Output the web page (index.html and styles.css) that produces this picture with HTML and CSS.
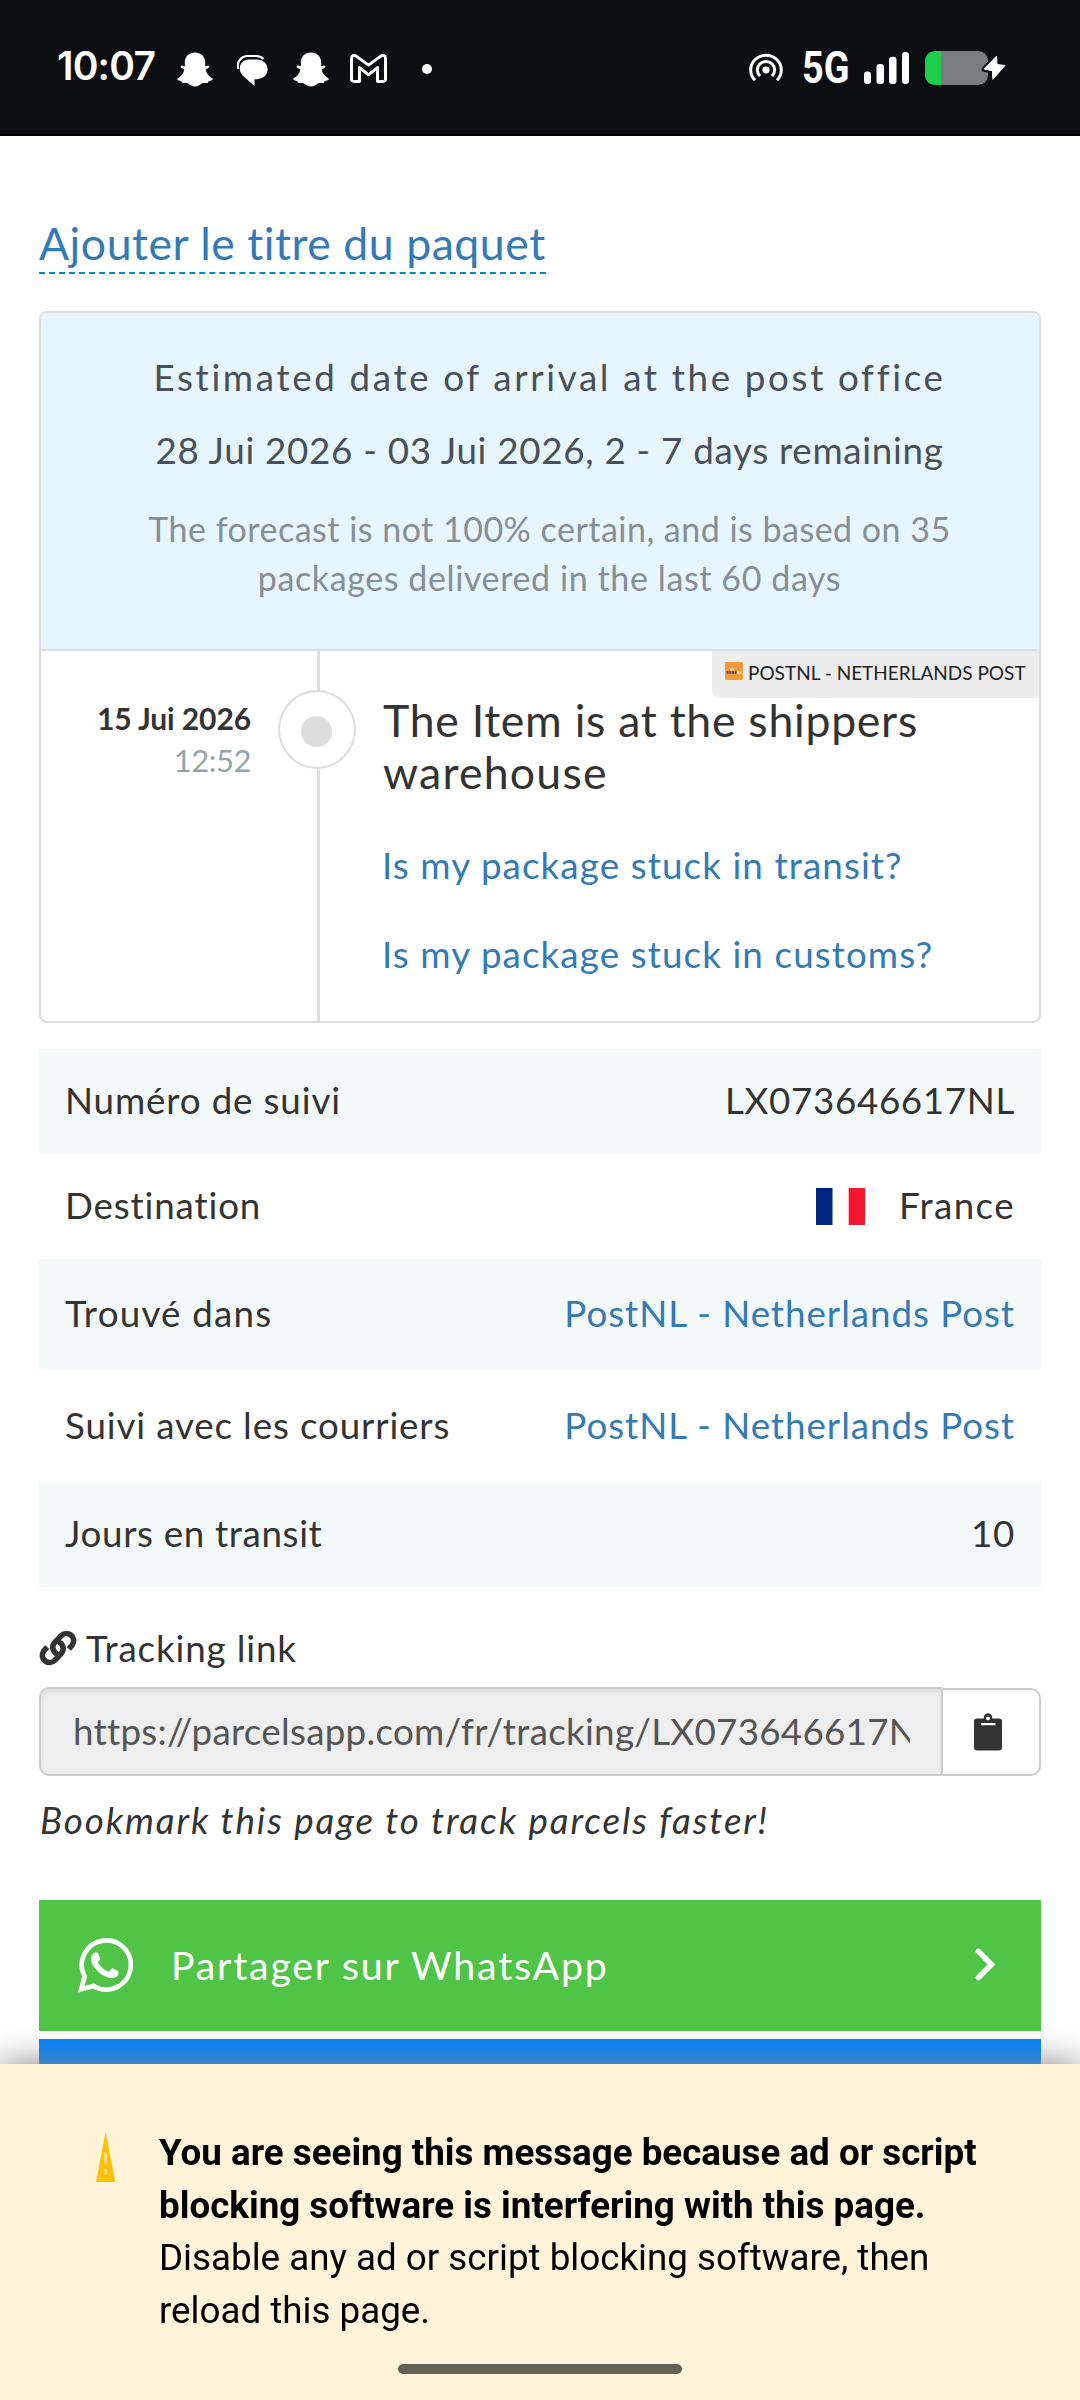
FILE: index.html
```
<!DOCTYPE html>
<html lang="fr">
<head>
<meta charset="utf-8">
<title>Suivi de colis</title>
<link rel="stylesheet" href="styles.css">
</head>
<body>
<svg class="defs" aria-hidden="true">
  <symbol id="ghost" viewBox="0 0 36 36" preserveAspectRatio="none">
    <path d="M18 .4c6 0 10.200 4.300 10.200 10.200l-.1 4 3.100-.8c1.300.2 1.700 1.400.7 2.200l-3.300 2.200c1 4 3.600 7.200 6.700 8.800.8.6.6 1.500-.6 2-1.300.5-3 .8-3.400 1.300-.3.600-.2 1.300-.9 1.600-1.600.3-3.600-.3-5.500.4-2.300 1-3.600 3.300-6.900 3.300s-4.600-2.300-6.900-3.300c-1.900-.7-3.900-.1-5.500-.4-.7-.3-.6-1-.9-1.600-.4-.5-2.100-.8-3.400-1.300-1.200-.5-1.400-1.400-.6-2 3.100-1.600 5.700-4.800 6.700-8.800L4.100 16c-1-.8-.6-2 .7-2.200l3.100.8-.1-4C7.800 4.700 12 .4 18 .4z" fill="#fff"/>
  </symbol>
</svg>

<header class="status">
  <span class="clock">10:07</span>
  <svg class="s-ghost" width="36" height="35"><use href="#ghost"/></svg>
  <svg class="s-chat" width="32" height="31" viewBox="0 0 32 32" preserveAspectRatio="none">
    <path d="M1.300 14.500C-.8 7 4 1 11.500 1H19c3 0 5.700 1.200 7.500 3" fill="none" stroke="#fff" stroke-width="2.200"/>
    <path d="M12 4.600h8.500A10.200 10.200 0 0 1 20.500 25h-3v7L5.600 21.200C-.2 14.500 3.500 4.600 12 4.600z" fill="#fff"/>
  </svg>
  <svg class="s-ghost" width="36" height="35"><use href="#ghost"/></svg>
  <svg class="s-mail" width="37" height="29" viewBox="0 0 37 30" preserveAspectRatio="none">
    <path d="M1.500 26V4.500C1.500 1.500 4 .5 6.200 2.200L18.500 11.500 30.800 2.200C33 .5 35.500 1.500 35.500 4.500V26a2.500 2.500 0 0 1-2.500 2.500H27.500V14L18.500 21.500 9.500 14V28.500H4A2.500 2.500 0 0 1 1.500 26z" fill="none" stroke="#fff" stroke-width="3" stroke-linejoin="round"/>
  </svg>
  <span class="s-dot"></span>
  <svg class="s-cast" width="34" height="29" viewBox="0 0 34 30" preserveAspectRatio="none">
    <circle cx="17" cy="17.500" r="3.600" fill="#fff"/>
    <g fill="none" stroke="#fff" stroke-width="3">
      <path d="M11 23.800a8.700 8.700 0 1 1 12 0"/>
      <path d="M6 28.300a15.300 15.300 0 1 1 22 0"/>
    </g>
  </svg>
  <span class="net"><span class="net-text">5G</span></span>
  <svg class="s-bars" width="45" height="32" viewBox="0 0 45 33" preserveAspectRatio="none" fill="#fff">
    <rect x="0" y="20" width="7" height="13" rx="3"/><rect x="12.500" y="12.500" width="7.500" height="20.500" rx="3"/><rect x="25" y="5" width="7.500" height="28" rx="3"/><rect x="38" y="0" width="7" height="33" rx="3"/>
  </svg>
  <svg class="s-batt" width="81" height="34" viewBox="0 0 81 36" preserveAspectRatio="none">
    <path d="M10 0H16V36H10A10 10 0 0 1 0 26V10A10 10 0 0 1 10 0z" fill="#1bcd48"/>
    <path d="M16 0H53A10 10 0 0 1 63 10V26A10 10 0 0 1 53 36H16z" fill="#7b7c7e"/>
    <path d="M71.500 5.500L59 19.500l8.500 2L67.500 30 79.500 15.500 71 14z" fill="#fff" stroke="#0d0e12" stroke-width="5" stroke-linejoin="round"/>
    <path d="M71.500 5.500L59 19l8.500 2L67.800 30 80 15.300 72 14.300z" fill="#fff" stroke="#fff" stroke-width="1" stroke-linejoin="round"/>
  </svg>
</header>

<main class="page">
  <a class="title">Ajouter le titre du paquet</a>

  <section class="card">
    <div class="forecast">
      <div class="f-head">Estimated date of arrival at the post office</div>
      <div class="f-date">28 Jui 2026 - 03 Jui 2026, 2 - 7 days remaining</div>
      <div class="f-note">The forecast is not 100% certain, and is based on 35<br><span class="f-note2">packages delivered in the last 60 days</span></div>
    </div>
    <div class="event">
      <div class="when"><strong class="day">15 Jui 2026</strong><span class="hour">12:52</span></div>
      <div class="rail"><div class="ring"><div class="bullet"></div></div></div>
      <div class="what">
        <div class="state">The Item is at the shippers<br><span class="state2">warehouse</span></div>
        <a class="help">Is my package stuck in transit?</a>
        <a class="help">Is my package stuck in customs?</a>
      </div>
      <div class="carrier">
        <svg width="18" height="18" viewBox="0 0 18 18">
          <rect width="18" height="18" rx="1.500" fill="#f39a3c"/>
          <path d="M4.500 5.500l1.500 1.500 1-1.800 1 1.800 1.500-1.500-.5 3H5z" fill="#fbd9ae"/>
          <path d="M1.500 10.500H11.500" stroke="#5a4a68" stroke-width="2.600" stroke-dasharray="2.200 .5"/>
          <path d="M12 10.500h4.500" stroke="#fde8cf" stroke-width="2.400" stroke-dasharray="2 .6"/>
        </svg>
        <span>POSTNL - NETHERLANDS POST</span>
      </div>
    </div>
  </section>

  <section class="facts">
    <div class="row shade"><span>Numéro de suivi</span><span class="t-num">LX073646617NL</span></div>
    <div class="row"><span>Destination</span><span class="dest"><svg width="49" height="37"><rect width="49" height="37" fill="#fff"/><rect width="16.500" height="37" fill="#00267f"/><rect x="32.700" width="16.300" height="37" fill="#f31830"/></svg><span class="t-wide">France</span></span></div>
    <div class="row tall shade"><span class="t-tr">Trouvé dans</span><a class="link">PostNL - Netherlands Post</a></div>
    <div class="row taller"><span>Suivi avec les courriers</span><a class="link">PostNL - Netherlands Post</a></div>
    <div class="row shade"><span class="t-num">Jours en transit</span><span class="t-num">10</span></div>
  </section>

  <div class="share-label">
    <svg width="38" height="38" viewBox="0 0 38 38" fill="none" stroke="#333" stroke-width="5.600" stroke-linecap="butt">
      <path d="M18.500 25.500C13 22 12.500 17 16 13.200L22 6.800C28 .5 38.500 8 33.200 16L29.800 20"/>
      <path d="M19.500 12.500C25 16 25.500 21 22 24.800L16 31.200C10 37.500 -.5 30 4.800 22L8.200 18"/>
    </svg>
    <span>Tracking link</span>
  </div>
  <div class="copy">
    <div class="field"><div class="url">https://parcelsapp.com/fr/tracking/LX073646617NL</div></div>
    <div class="copy-btn">
      <svg width="28" height="38" viewBox="0 0 28 38">
        <path d="M3 5.500H9.800A4.300 4.300 0 1 1 18.200 5.500H25A3 3 0 0 1 28 8.500V34.500A3 3 0 0 1 25 37.500H3A3 3 0 0 1 0 34.500V8.500A3 3 0 0 1 3 5.500z" fill="#333"/>
        <circle cx="14" cy="5.400" r="1.900" fill="#fff"/><rect x="7" y="10" width="14.500" height="2.200" fill="#fff"/>
      </svg>
    </div>
  </div>
  <p class="tip">Bookmark this page to track parcels faster!</p>

  <a class="share wa">
    <svg width="55" height="55" viewBox="0 0 56 56">
      <path d="M3.300 52.200L6.800 39.300A25 25 0 1 1 15.800 48.800z" fill="none" stroke="#fff" stroke-width="4.800" stroke-linejoin="miter"/>
      <path d="M15.500 15.800c1.200-1.200 4.300-1.300 5 0l2 4.900c.4 1.100-1.500 3.200-2.300 4 2.800 5 6.300 7.700 11 9.700 1-.8 3-4 4.200-3.500l5.300 2.600c1.300 1 .3 4.600-1.300 5.800-3.500 2.500-7 1.800-11 .2C21.500 36.500 17 31.500 14 25.500c-1.500-3.600-1-7.200 1.500-9.700z" fill="#fff"/>
    </svg>
    <span class="wa-text">Partager sur WhatsApp</span>
    <svg class="chev" width="21" height="33" viewBox="0 0 21 33"><path d="M3.400 3.400L16.500 16.500 3.400 29.600" fill="none" stroke="#fff" stroke-width="5.500" stroke-linecap="round" stroke-linejoin="miter"/></svg>
  </a>
  <div class="share fb"></div>
</main>

<aside class="notice">
  <svg width="20" height="50" viewBox="0 0 20 50">
    <path d="M9.700 0L19.300 50H0z" fill="#ffc107"/>
    <rect x="8.400" y="20.500" width="2.500" height="11" rx="1.200" fill="#ffe69a"/><rect x="8.400" y="36.500" width="2.500" height="6" rx="1.200" fill="#ffe69a"/>
  </svg>
  <p class="notice-text"><strong>You are seeing this message because ad or script<br>blocking software is interfering with this page.</strong><br>Disable any ad or script blocking software, then<br>reload this page.</p>
  <div class="pill"></div>
</aside>
</body>
</html>
```
FILE: styles.css
```
* { box-sizing: border-box; }
html, body { margin: 0; height: 2400px; overflow: hidden; }
body { background: #fff; color: #333; font: 36.75px/52px Lato, "Open Sans", sans-serif; letter-spacing: .85px; white-space: nowrap; font-variant-ligatures: none; }
svg { display: block; flex: none; }
.defs { position: absolute; width: 0; height: 0; }

.status { height: 136px; background: #0d0e12; border-bottom: 2px solid #000; display: flex; align-items: flex-start; color: #fff; padding-left: 57px; letter-spacing: 0; }
.clock { width: 120px; margin-top: 42px; font: 600 39px/48px Inter, sans-serif; letter-spacing: -.8px; }
.s-ghost { margin-top: 52px; }
.s-chat { margin: 55px 24px 0; }
.s-mail { margin: 54px 0 0 21px; }
.s-dot { width: 10px; height: 10px; border-radius: 50%; background: #fff; margin: 64px 0 0 35px; }
.s-cast { margin: 53px 0 0 317px; }
.net { width: 47px; margin: 43px 0 0 19px; }
.net-text { display: block; width: 60px; font: 700 44.5px/50px Roboto, sans-serif; transform: scaleX(.85); transform-origin: 0 0; }
.s-bars { margin: 52px 0 0 15px; }
.s-batt { margin: 51px 0 0 16px; }

.page { padding: 76px 39px 0; display: flex; flex-direction: column; }
.title { align-self: flex-start; height: 62px; font-size: 44.6px; line-height: 62px; letter-spacing: .52px; color: #337ab7; border-bottom: 2px dashed #08c; }

.card { margin-top: 37px; height: 712px; border: 2px solid #ddd; border-radius: 8px; overflow: hidden; }
.forecast { height: 338px; padding: 38px 0 0 19px; background: #e7f5ff; border-bottom: 2px solid #ddd; text-align: center; color: #495057; }
.f-head { letter-spacing: 2.65px; }
.f-date { margin-top: 21px; letter-spacing: .7px; }
.f-note { margin-top: 28px; font-size: 34px; line-height: 49px; letter-spacing: .49px; color: #868e96; }
.f-note2 { letter-spacing: .6px; }

.event { position: relative; height: 370px; display: flex; }
.when { width: 237px; padding: 46px 27px 0 0; display: flex; flex-direction: column; text-align: right; font-size: 31px; line-height: 42px; }
.day { font-size: 30px; letter-spacing: -.1px; }
.hour { color: #95a5a6; letter-spacing: -.5px; }
.rail { width: 78px; padding-top: 39px; background: linear-gradient(#ddd, #ddd) 39px 0 / 3px 100% no-repeat; }
.ring { height: 79px; border: 2px solid #ddd; border-radius: 50%; background: #fff; display: flex; align-items: center; justify-content: center; padding: 3px 2px 0 0; }
.bullet { width: 31px; height: 31px; border-radius: 50%; background: #ddd; }
.what { padding: 43px 0 0 26px; display: flex; flex-direction: column; }
.state { padding-left: 1px; font-size: 44.6px; line-height: 52px; letter-spacing: .72px; margin-bottom: 41px; }
.state2 { letter-spacing: 1.23px; }
.help { color: #337ab7; letter-spacing: 1.1px; margin-bottom: 37px; }
.carrier { position: absolute; top: 0; right: 0; width: 327px; height: 47px; padding: 0 0 1px 13px; display: flex; gap: 5px; background: #ececec; border-bottom-left-radius: 8px; font-size: 19px; line-height: 43px; letter-spacing: 0; color: #222; }
.carrier svg { margin-top: 11px; }

.facts { margin-top: 26px; }
.row { height: 105px; padding: 0 26px 3px 26px; display: flex; justify-content: space-between; align-items: center; }
.tall { height: 111px; }
.taller { height: 112px; }
.shade { background: #f3f9f9; }
.link { color: #337ab7; letter-spacing: .95px; }
.t-num { letter-spacing: .65px; }
.t-wide { letter-spacing: 1.4px; }
.t-tr { letter-spacing: 1.2px; }
.dest { display: flex; align-items: center; gap: 34px; }
.dest svg { margin-top: 2px; }

.share-label { margin-top: 35px; display: flex; gap: 9px; align-items: center; }
.copy { margin-top: 13px; height: 89px; display: flex; align-items: flex-end; }
.field { width: 904px; height: 89px; padding: 0 31px 0 32px; border: 2px solid #ccc; border-radius: 10px 0 0 10px; background: #eee; box-shadow: inset 0 3px 4px rgba(0, 0, 0, .08); color: #555; }
.url { line-height: 84px; letter-spacing: .28px; overflow: hidden; }
.copy-btn { width: 98px; height: 88px; border: 2px solid #ccc; border-left: 0; border-radius: 0 10px 10px 0; display: flex; align-items: center; padding-left: 31px; }
.tip { margin: 18px 0 54px; padding-left: 1px; font-style: italic; letter-spacing: 1.9px; }

.share { height: 131px; display: flex; align-items: center; color: #fff; }
.wa { background: #4fc447; padding: 0 45px 0 39px; font-size: 39.4px; letter-spacing: 1.75px; }
.wa-text { margin: 0 0 1px 38px; flex: 1; }
.fb { margin-top: 8px; background: #0084ff; }
.chev { margin-bottom: 2px; }

.notice { position: fixed; left: 0; right: 0; bottom: 0; height: 336px; background: #fff3d9; box-shadow: 0 0 34px #808080; display: flex; align-items: flex-start; padding: 63px 0 0 96px; color: #000; }
.notice svg { margin-top: 5px; }
.notice-text { margin: 0 0 0 43px; font: 36.75px/52.5px Roboto, sans-serif; letter-spacing: 0; }
.pill { position: absolute; left: 398px; bottom: 26px; width: 284px; height: 10px; border-radius: 5px; background: #666157; }
```
